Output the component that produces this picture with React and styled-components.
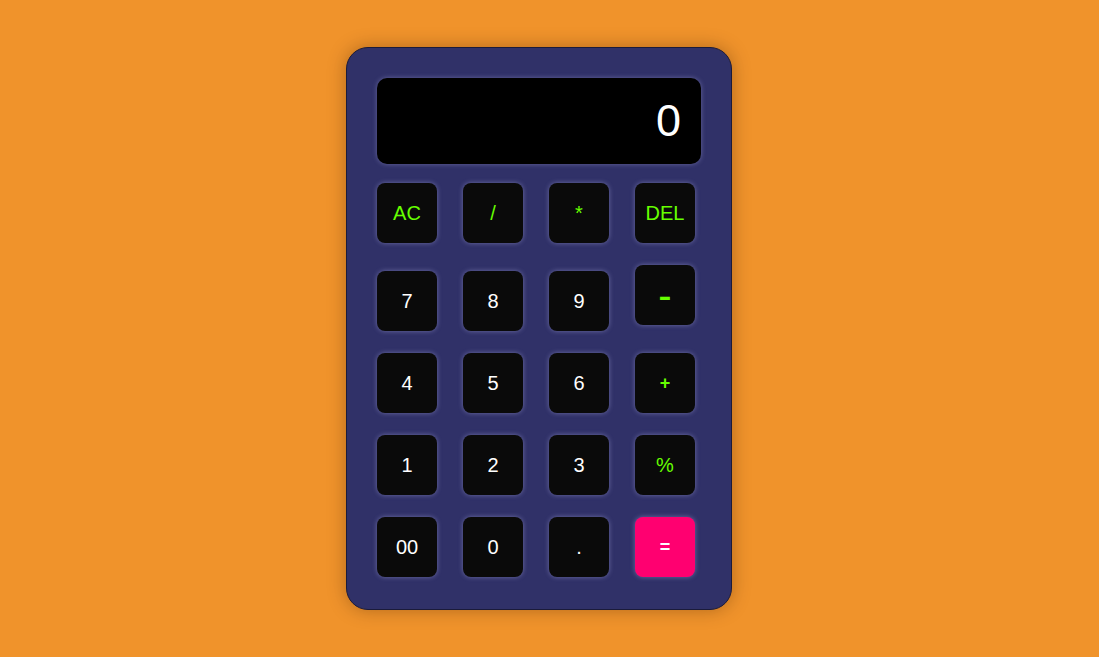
import styled, { createGlobalStyle } from 'styled-components';

const GlobalStyle = createGlobalStyle`
  html, body {
    margin: 0;
    padding: 0;
    background: #f0932b;
    font-family: "Liberation Sans", Arial, sans-serif;
  }
`;

const Page = styled.div`
  min-height: 657px;
  display: flex;
  align-items: center;
  justify-content: center;
  padding-right: 21px;
  box-sizing: border-box;
`;

const Card = styled.div`
  width: 386px;
  padding: 30px 30px 32px;
  box-sizing: border-box;
  background: #303168;
  border: 1px solid #1b1b3a;
  border-radius: 22px;
  box-shadow: 0 0 18px rgba(60, 30, 0, 0.35);
  display: flex;
  flex-direction: column;
  gap: 19px;
`;

const Display = styled.div`
  height: 86px;
  background: #000;
  border-radius: 10px;
  box-shadow: 0 0 5px rgba(200, 200, 255, 0.35);
  display: flex;
  align-items: center;
  justify-content: flex-end;
  padding: 0 20px;
  color: #fff;
  font-size: 45px;
`;

const Keys = styled.div`
  display: flex;
  flex-direction: column;
  gap: 22px;
`;

const Row = styled.div`
  display: flex;
  gap: 26px;
  align-items: flex-end;
  min-height: ${p => (p.$tall ? '66px' : '60px')};
`;

const Key = styled.button`
  width: 60px;
  height: 60px;
  padding: 0;
  border: none;
  border-radius: 8px;
  background: ${p => (p.$equals ? '#ff0070' : '#0a0a0a')};
  color: ${p => (p.$op ? '#66ff00' : '#fff')};
  font-family: "Liberation Sans", Arial, sans-serif;
  font-size: ${p => p.$size || 20}px;
  font-weight: ${p => (p.$bold ? 700 : 400)};
  box-shadow: 0 0 5px rgba(200, 200, 255, 0.4);
  align-self: ${p => (p.$up ? 'flex-start' : 'auto')};
  cursor: pointer;
  display: flex;
  align-items: center;
  justify-content: center;
`;

const rows = [
  [{ t: 'AC', op: true }, { t: '/', op: true }, { t: '*', op: true }, { t: 'DEL', op: true }],
  [{ t: '7' }, { t: '8' }, { t: '9' }, { t: '-', op: true, up: true, size: 40 }],
  [{ t: '4' }, { t: '5' }, { t: '6' }, { t: '+', op: true, bold: true, size: 18 }],
  [{ t: '1' }, { t: '2' }, { t: '3' }, { t: '%', op: true }],
  [{ t: '00' }, { t: '0' }, { t: '.' }, { t: '=', equals: true, bold: true, size: 18 }],
];

export default function App() {
  return (
    <>
      <GlobalStyle />
      <Page>
        <Card>
          <Display>0</Display>
          <Keys>
            {rows.map((row, i) => (
              <Row key={i} $tall={i === 1}>
                {row.map(k => (
                  <Key
                    key={k.t}
                    $op={k.op}
                    $bold={k.bold}
                    $up={k.up}
                    $equals={k.equals}
                    $size={k.size}
                  >
                    {k.t}
                  </Key>
                ))}
              </Row>
            ))}
          </Keys>
        </Card>
      </Page>
    </>
  );
}
